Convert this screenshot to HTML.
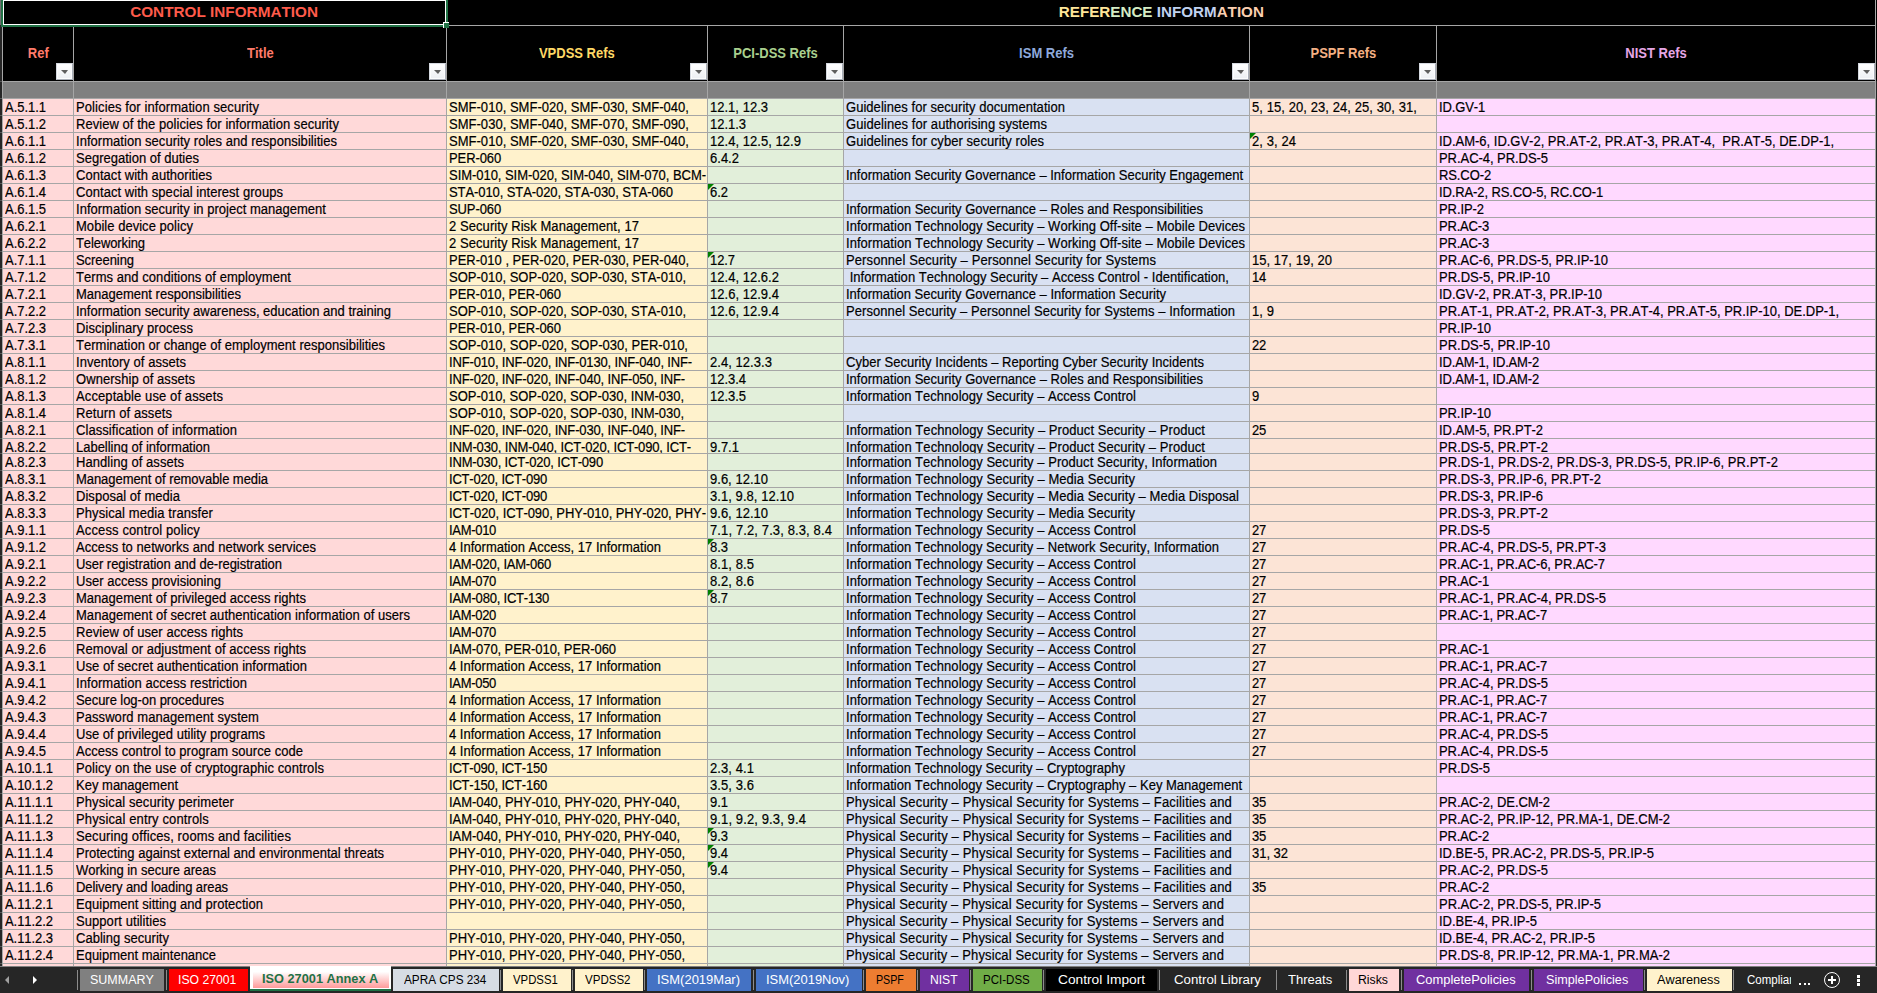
<!DOCTYPE html>
<html><head><meta charset="utf-8"><style>
*{margin:0;padding:0;box-sizing:border-box}
html,body{width:1877px;height:993px;overflow:hidden;background:#262626}
body{position:relative;font-family:"Liberation Sans",sans-serif;font-kerning:none;font-variant-ligatures:none}
div{position:absolute}
.t{overflow:hidden;color:#000;height:16px}
.t span{position:absolute;left:0;top:0;display:block;font-size:14px;line-height:16px;white-space:pre;transform:scaleX(0.92857);transform-origin:0 0;-webkit-text-stroke:0.2px #000}
.h{font-weight:bold;white-space:pre;text-align:center}
.h span{display:inline-block;transform-origin:50% 0}
.fb{width:17px;height:17px;border:1px solid;border-color:#d5d9e0 #a9aeb8 #a9aeb8 #d5d9e0;background:linear-gradient(#ffffff,#eceff3)}
.fb:before{content:"";position:absolute;left:0;top:0;right:0;bottom:0;border:1px solid #fbfcfd}
.fb:after{content:"";position:absolute;left:4px;top:6px;border-left:4px solid transparent;border-right:3px solid transparent;border-top:4px solid #5e5e5e}
.tt{top:969px;height:22px;white-space:pre;font-size:12px;line-height:22px}
.tt span{position:absolute;left:0;top:0;display:block;transform-origin:0 0}
.sep{top:970px;width:1px;height:20px;background:#8c8c8c}
</style></head><body>
<div style="left:3px;top:0px;width:1874px;height:81px;background:#000;"></div><div style="left:3px;top:82px;width:70px;height:16px;background:#808080;"></div><div style="left:3px;top:99px;width:70px;height:867px;background:#ffd9d9;"></div><div style="left:74px;top:82px;width:372px;height:16px;background:#808080;"></div><div style="left:74px;top:99px;width:372px;height:867px;background:#ffd9d9;"></div><div style="left:447px;top:82px;width:260px;height:16px;background:#808080;"></div><div style="left:447px;top:99px;width:260px;height:867px;background:#fff2cc;"></div><div style="left:708px;top:82px;width:135px;height:16px;background:#808080;"></div><div style="left:708px;top:99px;width:135px;height:867px;background:#e2efda;"></div><div style="left:844px;top:82px;width:405px;height:16px;background:#808080;"></div><div style="left:844px;top:99px;width:405px;height:867px;background:#d9e1f2;"></div><div style="left:1250px;top:82px;width:186px;height:16px;background:#808080;"></div><div style="left:1250px;top:99px;width:186px;height:867px;background:#fce4d6;"></div><div style="left:1437px;top:82px;width:438px;height:16px;background:#808080;"></div><div style="left:1437px;top:99px;width:438px;height:867px;background:#ffd9ff;"></div><div style="left:449px;top:25px;width:1427px;height:1px;background:#a6a6a6;"></div><div style="left:2px;top:81px;width:1874px;height:1px;background:#a6a6a6;"></div><div style="left:2px;top:98px;width:1874px;height:1px;background:#a6a6a6;"></div><div style="left:2px;top:115px;width:1874px;height:1px;background:#a6a6a6;"></div><div style="left:2px;top:132px;width:1874px;height:1px;background:#a6a6a6;"></div><div style="left:2px;top:149px;width:1874px;height:1px;background:#a6a6a6;"></div><div style="left:2px;top:166px;width:1874px;height:1px;background:#a6a6a6;"></div><div style="left:2px;top:183px;width:1874px;height:1px;background:#a6a6a6;"></div><div style="left:2px;top:200px;width:1874px;height:1px;background:#a6a6a6;"></div><div style="left:2px;top:217px;width:1874px;height:1px;background:#a6a6a6;"></div><div style="left:2px;top:234px;width:1874px;height:1px;background:#a6a6a6;"></div><div style="left:2px;top:251px;width:1874px;height:1px;background:#a6a6a6;"></div><div style="left:2px;top:268px;width:1874px;height:1px;background:#a6a6a6;"></div><div style="left:2px;top:285px;width:1874px;height:1px;background:#a6a6a6;"></div><div style="left:2px;top:302px;width:1874px;height:1px;background:#a6a6a6;"></div><div style="left:2px;top:319px;width:1874px;height:1px;background:#a6a6a6;"></div><div style="left:2px;top:336px;width:1874px;height:1px;background:#a6a6a6;"></div><div style="left:2px;top:353px;width:1874px;height:1px;background:#a6a6a6;"></div><div style="left:2px;top:370px;width:1874px;height:1px;background:#a6a6a6;"></div><div style="left:2px;top:387px;width:1874px;height:1px;background:#a6a6a6;"></div><div style="left:2px;top:404px;width:1874px;height:1px;background:#a6a6a6;"></div><div style="left:2px;top:421px;width:1874px;height:1px;background:#a6a6a6;"></div><div style="left:2px;top:438px;width:1874px;height:1px;background:#a6a6a6;"></div><div style="left:2px;top:453px;width:1874px;height:1px;background:#a6a6a6;"></div><div style="left:2px;top:470px;width:1874px;height:1px;background:#a6a6a6;"></div><div style="left:2px;top:487px;width:1874px;height:1px;background:#a6a6a6;"></div><div style="left:2px;top:504px;width:1874px;height:1px;background:#a6a6a6;"></div><div style="left:2px;top:521px;width:1874px;height:1px;background:#a6a6a6;"></div><div style="left:2px;top:538px;width:1874px;height:1px;background:#a6a6a6;"></div><div style="left:2px;top:555px;width:1874px;height:1px;background:#a6a6a6;"></div><div style="left:2px;top:572px;width:1874px;height:1px;background:#a6a6a6;"></div><div style="left:2px;top:589px;width:1874px;height:1px;background:#a6a6a6;"></div><div style="left:2px;top:606px;width:1874px;height:1px;background:#a6a6a6;"></div><div style="left:2px;top:623px;width:1874px;height:1px;background:#a6a6a6;"></div><div style="left:2px;top:640px;width:1874px;height:1px;background:#a6a6a6;"></div><div style="left:2px;top:657px;width:1874px;height:1px;background:#a6a6a6;"></div><div style="left:2px;top:674px;width:1874px;height:1px;background:#a6a6a6;"></div><div style="left:2px;top:691px;width:1874px;height:1px;background:#a6a6a6;"></div><div style="left:2px;top:708px;width:1874px;height:1px;background:#a6a6a6;"></div><div style="left:2px;top:725px;width:1874px;height:1px;background:#a6a6a6;"></div><div style="left:2px;top:742px;width:1874px;height:1px;background:#a6a6a6;"></div><div style="left:2px;top:759px;width:1874px;height:1px;background:#a6a6a6;"></div><div style="left:2px;top:776px;width:1874px;height:1px;background:#a6a6a6;"></div><div style="left:2px;top:793px;width:1874px;height:1px;background:#a6a6a6;"></div><div style="left:2px;top:810px;width:1874px;height:1px;background:#a6a6a6;"></div><div style="left:2px;top:827px;width:1874px;height:1px;background:#a6a6a6;"></div><div style="left:2px;top:844px;width:1874px;height:1px;background:#a6a6a6;"></div><div style="left:2px;top:861px;width:1874px;height:1px;background:#a6a6a6;"></div><div style="left:2px;top:878px;width:1874px;height:1px;background:#a6a6a6;"></div><div style="left:2px;top:895px;width:1874px;height:1px;background:#a6a6a6;"></div><div style="left:2px;top:912px;width:1874px;height:1px;background:#a6a6a6;"></div><div style="left:2px;top:929px;width:1874px;height:1px;background:#a6a6a6;"></div><div style="left:2px;top:946px;width:1874px;height:1px;background:#a6a6a6;"></div><div style="left:2px;top:963px;width:1874px;height:1px;background:#a6a6a6;"></div><div style="left:0px;top:966px;width:1877px;height:1px;background:#808080;"></div><div style="left:2px;top:26px;width:1px;height:940px;background:#a6a6a6;"></div><div style="left:73px;top:26px;width:1px;height:940px;background:#a6a6a6;"></div><div style="left:446px;top:28px;width:1px;height:938px;background:#a6a6a6;"></div><div style="left:707px;top:26px;width:1px;height:940px;background:#a6a6a6;"></div><div style="left:843px;top:26px;width:1px;height:940px;background:#a6a6a6;"></div><div style="left:1249px;top:26px;width:1px;height:940px;background:#a6a6a6;"></div><div style="left:1436px;top:26px;width:1px;height:940px;background:#a6a6a6;"></div><div style="left:1875px;top:0px;width:1px;height:966px;background:#a6a6a6;"></div><div style="left:0px;top:0px;width:1px;height:25px;background:#6e6e6e;"></div><div style="left:0px;top:81px;width:2px;height:1px;background:#5a5a5a;"></div><div style="left:0px;top:98px;width:2px;height:1px;background:#5a5a5a;"></div><div style="left:0px;top:115px;width:2px;height:1px;background:#5a5a5a;"></div><div style="left:0px;top:132px;width:2px;height:1px;background:#5a5a5a;"></div><div style="left:0px;top:149px;width:2px;height:1px;background:#5a5a5a;"></div><div style="left:0px;top:166px;width:2px;height:1px;background:#5a5a5a;"></div><div style="left:0px;top:183px;width:2px;height:1px;background:#5a5a5a;"></div><div style="left:0px;top:200px;width:2px;height:1px;background:#5a5a5a;"></div><div style="left:0px;top:217px;width:2px;height:1px;background:#5a5a5a;"></div><div style="left:0px;top:234px;width:2px;height:1px;background:#5a5a5a;"></div><div style="left:0px;top:251px;width:2px;height:1px;background:#5a5a5a;"></div><div style="left:0px;top:268px;width:2px;height:1px;background:#5a5a5a;"></div><div style="left:0px;top:285px;width:2px;height:1px;background:#5a5a5a;"></div><div style="left:0px;top:302px;width:2px;height:1px;background:#5a5a5a;"></div><div style="left:0px;top:319px;width:2px;height:1px;background:#5a5a5a;"></div><div style="left:0px;top:336px;width:2px;height:1px;background:#5a5a5a;"></div><div style="left:0px;top:353px;width:2px;height:1px;background:#5a5a5a;"></div><div style="left:0px;top:370px;width:2px;height:1px;background:#5a5a5a;"></div><div style="left:0px;top:387px;width:2px;height:1px;background:#5a5a5a;"></div><div style="left:0px;top:404px;width:2px;height:1px;background:#5a5a5a;"></div><div style="left:0px;top:421px;width:2px;height:1px;background:#5a5a5a;"></div><div style="left:0px;top:438px;width:2px;height:1px;background:#5a5a5a;"></div><div style="left:0px;top:453px;width:2px;height:1px;background:#5a5a5a;"></div><div style="left:0px;top:470px;width:2px;height:1px;background:#5a5a5a;"></div><div style="left:0px;top:487px;width:2px;height:1px;background:#5a5a5a;"></div><div style="left:0px;top:504px;width:2px;height:1px;background:#5a5a5a;"></div><div style="left:0px;top:521px;width:2px;height:1px;background:#5a5a5a;"></div><div style="left:0px;top:538px;width:2px;height:1px;background:#5a5a5a;"></div><div style="left:0px;top:555px;width:2px;height:1px;background:#5a5a5a;"></div><div style="left:0px;top:572px;width:2px;height:1px;background:#5a5a5a;"></div><div style="left:0px;top:589px;width:2px;height:1px;background:#5a5a5a;"></div><div style="left:0px;top:606px;width:2px;height:1px;background:#5a5a5a;"></div><div style="left:0px;top:623px;width:2px;height:1px;background:#5a5a5a;"></div><div style="left:0px;top:640px;width:2px;height:1px;background:#5a5a5a;"></div><div style="left:0px;top:657px;width:2px;height:1px;background:#5a5a5a;"></div><div style="left:0px;top:674px;width:2px;height:1px;background:#5a5a5a;"></div><div style="left:0px;top:691px;width:2px;height:1px;background:#5a5a5a;"></div><div style="left:0px;top:708px;width:2px;height:1px;background:#5a5a5a;"></div><div style="left:0px;top:725px;width:2px;height:1px;background:#5a5a5a;"></div><div style="left:0px;top:742px;width:2px;height:1px;background:#5a5a5a;"></div><div style="left:0px;top:759px;width:2px;height:1px;background:#5a5a5a;"></div><div style="left:0px;top:776px;width:2px;height:1px;background:#5a5a5a;"></div><div style="left:0px;top:793px;width:2px;height:1px;background:#5a5a5a;"></div><div style="left:0px;top:810px;width:2px;height:1px;background:#5a5a5a;"></div><div style="left:0px;top:827px;width:2px;height:1px;background:#5a5a5a;"></div><div style="left:0px;top:844px;width:2px;height:1px;background:#5a5a5a;"></div><div style="left:0px;top:861px;width:2px;height:1px;background:#5a5a5a;"></div><div style="left:0px;top:878px;width:2px;height:1px;background:#5a5a5a;"></div><div style="left:0px;top:895px;width:2px;height:1px;background:#5a5a5a;"></div><div style="left:0px;top:912px;width:2px;height:1px;background:#5a5a5a;"></div><div style="left:0px;top:929px;width:2px;height:1px;background:#5a5a5a;"></div><div style="left:0px;top:946px;width:2px;height:1px;background:#5a5a5a;"></div><div style="left:0px;top:963px;width:2px;height:1px;background:#5a5a5a;"></div><div class="h" style="left:3px;top:2px;width:443px;height:20px;font-size:15px;line-height:20px"><span style="transform:scaleX(1.02)"><span style="color:#ff5b4b">CONTROL INFORMATION</span></span></div><div class="h" style="left:447px;top:2px;width:1428px;height:20px;font-size:15px;line-height:20px"><span style="transform:scaleX(1.012)"><span style="color:#ffe699">R</span><span style="color:#ffe699">E</span><span style="color:#ffe699">F</span><span style="color:#ffe699">E</span><span style="color:#ffe699">R</span><span style="color:#d5ecc4">E</span><span style="color:#d5ecc4">N</span><span style="color:#d5ecc4">C</span><span style="color:#d5ecc4">E</span><span style="color:#000"> </span><span style="color:#c0d2f0">I</span><span style="color:#c0d2f0">N</span><span style="color:#c0d2f0">F</span><span style="color:#c0d2f0">O</span><span style="color:#c0d2f0">R</span><span style="color:#c0d2f0">M</span><span style="color:#fbcfb0">A</span><span style="color:#fbcfb0">T</span><span style="color:#fbcfb0">I</span><span style="color:#fbcfb0">O</span><span style="color:#fbcfb0">N</span></span></div><div class="h" style="left:3px;top:45px;width:70px;height:16px;font-size:14px;line-height:16px"><span style="transform:scaleX(0.9285714285714286)"><span style="color:#ff7b6b">Ref</span></span></div><div class="fb" style="left:56px;top:63px"></div><div class="h" style="left:74px;top:45px;width:372px;height:16px;font-size:14px;line-height:16px"><span style="transform:scaleX(0.9285714285714286)"><span style="color:#ff7b6b">Title</span></span></div><div class="fb" style="left:429px;top:63px"></div><div class="h" style="left:447px;top:45px;width:260px;height:16px;font-size:14px;line-height:16px"><span style="transform:scaleX(0.9285714285714286)"><span style="color:#ffd966">VPDSS Refs</span></span></div><div class="fb" style="left:690px;top:63px"></div><div class="h" style="left:708px;top:45px;width:135px;height:16px;font-size:14px;line-height:16px"><span style="transform:scaleX(0.9285714285714286)"><span style="color:#a9d08e">PCI-DSS Refs</span></span></div><div class="fb" style="left:826px;top:63px"></div><div class="h" style="left:844px;top:45px;width:405px;height:16px;font-size:14px;line-height:16px"><span style="transform:scaleX(0.9285714285714286)"><span style="color:#8ea9db">ISM Refs</span></span></div><div class="fb" style="left:1232px;top:63px"></div><div class="h" style="left:1250px;top:45px;width:186px;height:16px;font-size:14px;line-height:16px"><span style="transform:scaleX(0.9285714285714286)"><span style="color:#f4b084">PSPF Refs</span></span></div><div class="fb" style="left:1419px;top:63px"></div><div class="h" style="left:1437px;top:45px;width:438px;height:16px;font-size:14px;line-height:16px"><span style="transform:scaleX(0.9285714285714286)"><span style="color:#e6a6e6">NIST Refs</span></span></div><div class="fb" style="left:1858px;top:63px"></div><div style="left:1px;top:0px;width:2px;height:27px;background:#217346;"></div><div style="left:1px;top:25px;width:447px;height:2px;background:#217346;"></div><div style="left:446px;top:0px;width:2px;height:23px;background:#217346;"></div><div style="left:3px;top:0px;width:1px;height:24px;background:#fff;"></div><div style="left:3px;top:0px;width:443px;height:1px;background:#fff;"></div><div style="left:3px;top:24px;width:442px;height:1px;background:#fff;"></div><div style="left:445px;top:0px;width:1px;height:23px;background:#fff;"></div><div style="left:443px;top:22px;width:6px;height:1px;background:#fff;"></div><div style="left:443px;top:22px;width:1px;height:6px;background:#fff;"></div><div style="left:444px;top:23px;width:5px;height:5px;background:#217346;"></div><div class="t" style="left:5px;top:99px;width:68px;height:16px"><span style="letter-spacing:-0.030px">A.5.1.1</span></div><div class="t" style="left:76px;top:99px;width:370px;height:16px"><span style="letter-spacing:0.101px">Policies for information security</span></div><div class="t" style="left:449px;top:99px;width:258px;height:16px"><span style="letter-spacing:0.027px">SMF-010, SMF-020, SMF-030, SMF-040,</span></div><div class="t" style="left:710px;top:99px;width:133px;height:16px"><span style="letter-spacing:0.019px">12.1, 12.3</span></div><div class="t" style="left:846px;top:99px;width:403px;height:16px"><span style="letter-spacing:0.044px">Guidelines for security documentation</span></div><div class="t" style="left:1252px;top:99px;width:184px;height:16px"><span style="letter-spacing:0.085px">5, 15, 20, 23, 24, 25, 30, 31,</span></div><div class="t" style="left:1439px;top:99px;width:436px;height:16px"><span style="letter-spacing:-0.147px">ID.GV-1</span></div><div class="t" style="left:5px;top:116px;width:68px;height:16px"><span style="letter-spacing:-0.030px">A.5.1.2</span></div><div class="t" style="left:76px;top:116px;width:370px;height:16px"><span style="letter-spacing:0.050px">Review of the policies for information security</span></div><div class="t" style="left:449px;top:116px;width:258px;height:16px"><span style="letter-spacing:0.027px">SMF-030, SMF-040, SMF-070, SMF-090,</span></div><div class="t" style="left:710px;top:116px;width:133px;height:16px"><span style="letter-spacing:-0.026px">12.1.3</span></div><div class="t" style="left:846px;top:116px;width:403px;height:16px"><span style="letter-spacing:0.073px">Guidelines for authorising systems</span></div><div class="t" style="left:5px;top:133px;width:68px;height:16px"><span style="letter-spacing:-0.030px">A.6.1.1</span></div><div class="t" style="left:76px;top:133px;width:370px;height:16px"><span style="letter-spacing:0.037px">Information security roles and responsibilities</span></div><div class="t" style="left:449px;top:133px;width:258px;height:16px"><span style="letter-spacing:0.027px">SMF-010, SMF-020, SMF-030, SMF-040,</span></div><div class="t" style="left:710px;top:133px;width:133px;height:16px"><span style="letter-spacing:0.044px">12.4, 12.5, 12.9</span></div><div class="t" style="left:846px;top:133px;width:403px;height:16px"><span style="letter-spacing:0.068px">Guidelines for cyber security roles</span></div><div class="t" style="left:1252px;top:133px;width:184px;height:16px"><span style="letter-spacing:0.085px">2, 3, 24</span></div><div style="left:1250px;top:133px;width:0;height:0;border-top:6px solid #008000;border-right:6px solid transparent"></div><div class="t" style="left:1439px;top:133px;width:436px;height:16px"><span style="letter-spacing:-0.014px">ID.AM-6, ID.GV-2, PR.AT-2, PR.AT-3, PR.AT-4,  PR.AT-5, DE.DP-1,</span></div><div class="t" style="left:5px;top:150px;width:68px;height:16px"><span style="letter-spacing:-0.030px">A.6.1.2</span></div><div class="t" style="left:76px;top:150px;width:370px;height:16px"><span style="letter-spacing:0.007px">Segregation of duties</span></div><div class="t" style="left:449px;top:150px;width:258px;height:16px"><span style="letter-spacing:-0.115px">PER-060</span></div><div class="t" style="left:710px;top:150px;width:133px;height:16px"><span style="letter-spacing:0.019px">6.4.2</span></div><div class="t" style="left:1439px;top:150px;width:436px;height:16px"><span style="letter-spacing:-0.054px">PR.AC-4, PR.DS-5</span></div><div class="t" style="left:5px;top:167px;width:68px;height:16px"><span style="letter-spacing:-0.030px">A.6.1.3</span></div><div class="t" style="left:76px;top:167px;width:370px;height:16px"><span style="letter-spacing:0.039px">Contact with authorities</span></div><div class="t" style="left:449px;top:167px;width:258px;height:16px"><span style="letter-spacing:-0.044px">SIM-010, SIM-020, SIM-040, SIM-070, BCM-</span></div><div class="t" style="left:846px;top:167px;width:403px;height:16px"><span style="letter-spacing:-0.007px">Information Security Governance – Information Security Engagement</span></div><div class="t" style="left:1439px;top:167px;width:436px;height:16px"><span style="letter-spacing:-0.112px">RS.CO-2</span></div><div class="t" style="left:5px;top:184px;width:68px;height:16px"><span style="letter-spacing:-0.030px">A.6.1.4</span></div><div class="t" style="left:76px;top:184px;width:370px;height:16px"><span style="letter-spacing:0.053px">Contact with special interest groups</span></div><div class="t" style="left:449px;top:184px;width:258px;height:16px"><span style="letter-spacing:-0.091px">STA-010, STA-020, STA-030, STA-060</span></div><div class="t" style="left:710px;top:184px;width:133px;height:16px"><span style="letter-spacing:-0.026px">6.2</span></div><div style="left:708px;top:184px;width:0;height:0;border-top:6px solid #008000;border-right:6px solid transparent"></div><div class="t" style="left:1439px;top:184px;width:436px;height:16px"><span style="letter-spacing:-0.123px">ID.RA-2, RS.CO-5, RC.CO-1</span></div><div class="t" style="left:5px;top:201px;width:68px;height:16px"><span style="letter-spacing:-0.030px">A.6.1.5</span></div><div class="t" style="left:76px;top:201px;width:370px;height:16px"><span style="letter-spacing:0.018px">Information security in project management</span></div><div class="t" style="left:449px;top:201px;width:258px;height:16px"><span style="letter-spacing:-0.115px">SUP-060</span></div><div class="t" style="left:846px;top:201px;width:403px;height:16px"><span style="letter-spacing:0.001px">Information Security Governance – Roles and Responsibilities</span></div><div class="t" style="left:1439px;top:201px;width:436px;height:16px"><span style="letter-spacing:-0.079px">PR.IP-2</span></div><div class="t" style="left:5px;top:218px;width:68px;height:16px"><span style="letter-spacing:-0.030px">A.6.2.1</span></div><div class="t" style="left:76px;top:218px;width:370px;height:16px"><span style="letter-spacing:0.036px">Mobile device policy</span></div><div class="t" style="left:449px;top:218px;width:258px;height:16px"><span style="letter-spacing:0.077px">2 Security Risk Management, 17</span></div><div class="t" style="left:846px;top:218px;width:403px;height:16px"><span style="letter-spacing:0.038px">Information Technology Security – Working Off-site – Mobile Devices</span></div><div class="t" style="left:1439px;top:218px;width:436px;height:16px"><span style="letter-spacing:-0.198px">PR.AC-3</span></div><div class="t" style="left:5px;top:235px;width:68px;height:16px"><span style="letter-spacing:-0.030px">A.6.2.2</span></div><div class="t" style="left:76px;top:235px;width:370px;height:16px"><span style="letter-spacing:-0.106px">Teleworking</span></div><div class="t" style="left:449px;top:235px;width:258px;height:16px"><span style="letter-spacing:0.077px">2 Security Risk Management, 17</span></div><div class="t" style="left:846px;top:235px;width:403px;height:16px"><span style="letter-spacing:0.038px">Information Technology Security – Working Off-site – Mobile Devices</span></div><div class="t" style="left:1439px;top:235px;width:436px;height:16px"><span style="letter-spacing:-0.198px">PR.AC-3</span></div><div class="t" style="left:5px;top:252px;width:68px;height:16px"><span style="letter-spacing:-0.030px">A.7.1.1</span></div><div class="t" style="left:76px;top:252px;width:370px;height:16px"><span style="letter-spacing:-0.064px">Screening</span></div><div class="t" style="left:449px;top:252px;width:258px;height:16px"><span style="letter-spacing:0.003px">PER-010 , PER-020, PER-030, PER-040,</span></div><div class="t" style="left:710px;top:252px;width:133px;height:16px"><span style="letter-spacing:-0.081px">12.7</span></div><div style="left:708px;top:252px;width:0;height:0;border-top:6px solid #008000;border-right:6px solid transparent"></div><div class="t" style="left:846px;top:252px;width:403px;height:16px"><span style="letter-spacing:0.107px">Personnel Security – Personnel Security for Systems</span></div><div class="t" style="left:1252px;top:252px;width:184px;height:16px"><span style="letter-spacing:0.038px">15, 17, 19, 20</span></div><div class="t" style="left:1439px;top:252px;width:436px;height:16px"><span style="letter-spacing:-0.032px">PR.AC-6, PR.DS-5, PR.IP-10</span></div><div class="t" style="left:5px;top:269px;width:68px;height:16px"><span style="letter-spacing:-0.030px">A.7.1.2</span></div><div class="t" style="left:76px;top:269px;width:370px;height:16px"><span style="letter-spacing:0.058px">Terms and conditions of employment</span></div><div class="t" style="left:449px;top:269px;width:258px;height:16px"><span style="letter-spacing:-0.000px">SOP-010, SOP-020, SOP-030, STA-010,</span></div><div class="t" style="left:710px;top:269px;width:133px;height:16px"><span style="letter-spacing:0.030px">12.4, 12.6.2</span></div><div class="t" style="left:846px;top:269px;width:403px;height:16px"><span style="letter-spacing:0.047px"> Information Technology Security – Access Control - Identification,</span></div><div class="t" style="left:1252px;top:269px;width:184px;height:16px"><span style="letter-spacing:-0.248px">14</span></div><div class="t" style="left:1439px;top:269px;width:436px;height:16px"><span style="letter-spacing:-0.016px">PR.DS-5, PR.IP-10</span></div><div class="t" style="left:5px;top:286px;width:68px;height:16px"><span style="letter-spacing:-0.030px">A.7.2.1</span></div><div class="t" style="left:76px;top:286px;width:370px;height:16px"><span style="letter-spacing:0.010px">Management responsibilities</span></div><div class="t" style="left:449px;top:286px;width:258px;height:16px"><span style="letter-spacing:-0.049px">PER-010, PER-060</span></div><div class="t" style="left:710px;top:286px;width:133px;height:16px"><span style="letter-spacing:0.030px">12.6, 12.9.4</span></div><div class="t" style="left:846px;top:286px;width:403px;height:16px"><span style="letter-spacing:-0.002px">Information Security Governance – Information Security</span></div><div class="t" style="left:1439px;top:286px;width:436px;height:16px"><span style="letter-spacing:-0.041px">ID.GV-2, PR.AT-3, PR.IP-10</span></div><div class="t" style="left:5px;top:303px;width:68px;height:16px"><span style="letter-spacing:-0.030px">A.7.2.2</span></div><div class="t" style="left:76px;top:303px;width:370px;height:16px"><span style="letter-spacing:-0.001px">Information security awareness, education and training</span></div><div class="t" style="left:449px;top:303px;width:258px;height:16px"><span style="letter-spacing:-0.000px">SOP-010, SOP-020, SOP-030, STA-010,</span></div><div class="t" style="left:710px;top:303px;width:133px;height:16px"><span style="letter-spacing:0.030px">12.6, 12.9.4</span></div><div class="t" style="left:846px;top:303px;width:403px;height:16px"><span style="letter-spacing:0.076px">Personnel Security – Personnel Security for Systems – Information</span></div><div class="t" style="left:1252px;top:303px;width:184px;height:16px"><span style="letter-spacing:0.085px">1, 9</span></div><div class="t" style="left:1439px;top:303px;width:436px;height:16px"><span style="letter-spacing:-0.003px">PR.AT-1, PR.AT-2, PR.AT-3, PR.AT-4, PR.AT-5, PR.IP-10, DE.DP-1,</span></div><div class="t" style="left:5px;top:320px;width:68px;height:16px"><span style="letter-spacing:-0.030px">A.7.2.3</span></div><div class="t" style="left:76px;top:320px;width:370px;height:16px"><span style="letter-spacing:0.076px">Disciplinary process</span></div><div class="t" style="left:449px;top:320px;width:258px;height:16px"><span style="letter-spacing:-0.049px">PER-010, PER-060</span></div><div class="t" style="left:1439px;top:320px;width:436px;height:16px"><span style="letter-spacing:-0.100px">PR.IP-10</span></div><div class="t" style="left:5px;top:337px;width:68px;height:16px"><span style="letter-spacing:-0.030px">A.7.3.1</span></div><div class="t" style="left:76px;top:337px;width:370px;height:16px"><span style="letter-spacing:0.025px">Termination or change of employment responsibilities</span></div><div class="t" style="left:449px;top:337px;width:258px;height:16px"><span style="letter-spacing:0.017px">SOP-010, SOP-020, SOP-030, PER-010,</span></div><div class="t" style="left:1252px;top:337px;width:184px;height:16px"><span style="letter-spacing:-0.248px">22</span></div><div class="t" style="left:1439px;top:337px;width:436px;height:16px"><span style="letter-spacing:-0.016px">PR.DS-5, PR.IP-10</span></div><div class="t" style="left:5px;top:354px;width:68px;height:16px"><span style="letter-spacing:-0.030px">A.8.1.1</span></div><div class="t" style="left:76px;top:354px;width:370px;height:16px"><span style="letter-spacing:0.050px">Inventory of assets</span></div><div class="t" style="left:449px;top:354px;width:258px;height:16px"><span style="letter-spacing:-0.164px">INF-010, INF-020, INF-0130, INF-040, INF-</span></div><div class="t" style="left:710px;top:354px;width:133px;height:16px"><span style="letter-spacing:0.055px">2.4, 12.3.3</span></div><div class="t" style="left:846px;top:354px;width:403px;height:16px"><span style="letter-spacing:0.031px">Cyber Security Incidents – Reporting Cyber Security Incidents</span></div><div class="t" style="left:1439px;top:354px;width:436px;height:16px"><span style="letter-spacing:-0.173px">ID.AM-1, ID.AM-2</span></div><div class="t" style="left:5px;top:371px;width:68px;height:16px"><span style="letter-spacing:-0.030px">A.8.1.2</span></div><div class="t" style="left:76px;top:371px;width:370px;height:16px"><span style="letter-spacing:0.069px">Ownership of assets</span></div><div class="t" style="left:449px;top:371px;width:258px;height:16px"><span style="letter-spacing:-0.162px">INF-020, INF-020, INF-040, INF-050, INF-</span></div><div class="t" style="left:710px;top:371px;width:133px;height:16px"><span style="letter-spacing:-0.026px">12.3.4</span></div><div class="t" style="left:846px;top:371px;width:403px;height:16px"><span style="letter-spacing:0.001px">Information Security Governance – Roles and Responsibilities</span></div><div class="t" style="left:1439px;top:371px;width:436px;height:16px"><span style="letter-spacing:-0.173px">ID.AM-1, ID.AM-2</span></div><div class="t" style="left:5px;top:388px;width:68px;height:16px"><span style="letter-spacing:-0.030px">A.8.1.3</span></div><div class="t" style="left:76px;top:388px;width:370px;height:16px"><span style="letter-spacing:0.111px">Acceptable use of assets</span></div><div class="t" style="left:449px;top:388px;width:258px;height:16px"><span style="letter-spacing:-0.017px">SOP-010, SOP-020, SOP-030, INM-030,</span></div><div class="t" style="left:710px;top:388px;width:133px;height:16px"><span style="letter-spacing:-0.026px">12.3.5</span></div><div class="t" style="left:846px;top:388px;width:403px;height:16px"><span style="letter-spacing:0.038px">Information Technology Security – Access Control</span></div><div class="t" style="left:1252px;top:388px;width:184px;height:16px"><span style="letter-spacing:-0.248px">9</span></div><div class="t" style="left:5px;top:405px;width:68px;height:16px"><span style="letter-spacing:-0.030px">A.8.1.4</span></div><div class="t" style="left:76px;top:405px;width:370px;height:16px"><span style="letter-spacing:0.090px">Return of assets</span></div><div class="t" style="left:449px;top:405px;width:258px;height:16px"><span style="letter-spacing:-0.017px">SOP-010, SOP-020, SOP-030, INM-030,</span></div><div class="t" style="left:1439px;top:405px;width:436px;height:16px"><span style="letter-spacing:-0.100px">PR.IP-10</span></div><div class="t" style="left:5px;top:422px;width:68px;height:16px"><span style="letter-spacing:-0.030px">A.8.2.1</span></div><div class="t" style="left:76px;top:422px;width:370px;height:16px"><span style="letter-spacing:0.076px">Classification of information</span></div><div class="t" style="left:449px;top:422px;width:258px;height:16px"><span style="letter-spacing:-0.162px">INF-020, INF-020, INF-030, INF-040, INF-</span></div><div class="t" style="left:846px;top:422px;width:403px;height:16px"><span style="letter-spacing:0.063px">Information Technology Security – Product Security – Product</span></div><div class="t" style="left:1252px;top:422px;width:184px;height:16px"><span style="letter-spacing:-0.248px">25</span></div><div class="t" style="left:1439px;top:422px;width:436px;height:16px"><span style="letter-spacing:-0.050px">ID.AM-5, PR.PT-2</span></div><div class="t" style="left:5px;top:439px;width:68px;height:14px"><span style="letter-spacing:-0.030px">A.8.2.2</span></div><div class="t" style="left:76px;top:439px;width:370px;height:14px"><span style="letter-spacing:-0.019px">Labelling of information</span></div><div class="t" style="left:449px;top:439px;width:258px;height:14px"><span style="letter-spacing:-0.156px">INM-030, INM-040, ICT-020, ICT-090, ICT-</span></div><div class="t" style="left:710px;top:439px;width:133px;height:14px"><span style="letter-spacing:0.019px">9.7.1</span></div><div class="t" style="left:846px;top:439px;width:403px;height:14px"><span style="letter-spacing:0.063px">Information Technology Security – Product Security – Product</span></div><div class="t" style="left:1439px;top:439px;width:436px;height:14px"><span style="letter-spacing:0.043px">PR.DS-5, PR.PT-2</span></div><div class="t" style="left:5px;top:454px;width:68px;height:16px"><span style="letter-spacing:-0.030px">A.8.2.3</span></div><div class="t" style="left:76px;top:454px;width:370px;height:16px"><span style="letter-spacing:0.063px">Handling of assets</span></div><div class="t" style="left:449px;top:454px;width:258px;height:16px"><span style="letter-spacing:-0.182px">INM-030, ICT-020, ICT-090</span></div><div class="t" style="left:846px;top:454px;width:403px;height:16px"><span style="letter-spacing:0.043px">Information Technology Security – Product Security, Information</span></div><div class="t" style="left:1439px;top:454px;width:436px;height:16px"><span style="letter-spacing:0.049px">PR.DS-1, PR.DS-2, PR.DS-3, PR.DS-5, PR.IP-6, PR.PT-2</span></div><div class="t" style="left:5px;top:471px;width:68px;height:16px"><span style="letter-spacing:-0.030px">A.8.3.1</span></div><div class="t" style="left:76px;top:471px;width:370px;height:16px"><span style="letter-spacing:-0.062px">Management of removable media</span></div><div class="t" style="left:449px;top:471px;width:258px;height:16px"><span style="letter-spacing:-0.212px">ICT-020, ICT-090</span></div><div class="t" style="left:710px;top:471px;width:133px;height:16px"><span style="letter-spacing:0.019px">9.6, 12.10</span></div><div class="t" style="left:846px;top:471px;width:403px;height:16px"><span style="letter-spacing:0.048px">Information Technology Security – Media Security</span></div><div class="t" style="left:1439px;top:471px;width:436px;height:16px"><span style="letter-spacing:0.039px">PR.DS-3, PR.IP-6, PR.PT-2</span></div><div class="t" style="left:5px;top:488px;width:68px;height:16px"><span style="letter-spacing:-0.030px">A.8.3.2</span></div><div class="t" style="left:76px;top:488px;width:370px;height:16px"><span style="letter-spacing:0.043px">Disposal of media</span></div><div class="t" style="left:449px;top:488px;width:258px;height:16px"><span style="letter-spacing:-0.212px">ICT-020, ICT-090</span></div><div class="t" style="left:710px;top:488px;width:133px;height:16px"><span style="letter-spacing:0.063px">3.1, 9.8, 12.10</span></div><div class="t" style="left:846px;top:488px;width:403px;height:16px"><span style="letter-spacing:0.047px">Information Technology Security – Media Security – Media Disposal</span></div><div class="t" style="left:1439px;top:488px;width:436px;height:16px"><span style="letter-spacing:-0.002px">PR.DS-3, PR.IP-6</span></div><div class="t" style="left:5px;top:505px;width:68px;height:16px"><span style="letter-spacing:-0.030px">A.8.3.3</span></div><div class="t" style="left:76px;top:505px;width:370px;height:16px"><span style="letter-spacing:0.089px">Physical media transfer</span></div><div class="t" style="left:449px;top:505px;width:258px;height:16px"><span style="letter-spacing:-0.064px">ICT-020, ICT-090, PHY-010, PHY-020, PHY-</span></div><div class="t" style="left:710px;top:505px;width:133px;height:16px"><span style="letter-spacing:0.019px">9.6, 12.10</span></div><div class="t" style="left:846px;top:505px;width:403px;height:16px"><span style="letter-spacing:0.048px">Information Technology Security – Media Security</span></div><div class="t" style="left:1439px;top:505px;width:436px;height:16px"><span style="letter-spacing:0.043px">PR.DS-3, PR.PT-2</span></div><div class="t" style="left:5px;top:522px;width:68px;height:16px"><span style="letter-spacing:-0.030px">A.9.1.1</span></div><div class="t" style="left:76px;top:522px;width:370px;height:16px"><span style="letter-spacing:0.134px">Access control policy</span></div><div class="t" style="left:449px;top:522px;width:258px;height:16px"><span style="letter-spacing:-0.328px">IAM-010</span></div><div class="t" style="left:710px;top:522px;width:133px;height:16px"><span style="letter-spacing:0.129px">7.1, 7.2, 7.3, 8.3, 8.4</span></div><div class="t" style="left:846px;top:522px;width:403px;height:16px"><span style="letter-spacing:0.038px">Information Technology Security – Access Control</span></div><div class="t" style="left:1252px;top:522px;width:184px;height:16px"><span style="letter-spacing:-0.248px">27</span></div><div class="t" style="left:1439px;top:522px;width:436px;height:16px"><span style="letter-spacing:-0.044px">PR.DS-5</span></div><div class="t" style="left:5px;top:539px;width:68px;height:16px"><span style="letter-spacing:-0.030px">A.9.1.2</span></div><div class="t" style="left:76px;top:539px;width:370px;height:16px"><span style="letter-spacing:0.063px">Access to networks and network services</span></div><div class="t" style="left:449px;top:539px;width:258px;height:16px"><span style="letter-spacing:0.009px">4 Information Access, 17 Information</span></div><div class="t" style="left:710px;top:539px;width:133px;height:16px"><span style="letter-spacing:-0.026px">8.3</span></div><div style="left:708px;top:539px;width:0;height:0;border-top:6px solid #008000;border-right:6px solid transparent"></div><div class="t" style="left:846px;top:539px;width:403px;height:16px"><span style="letter-spacing:0.028px">Information Technology Security – Network Security, Information</span></div><div class="t" style="left:1252px;top:539px;width:184px;height:16px"><span style="letter-spacing:-0.248px">27</span></div><div class="t" style="left:1439px;top:539px;width:436px;height:16px"><span style="letter-spacing:0.006px">PR.AC-4, PR.DS-5, PR.PT-3</span></div><div class="t" style="left:5px;top:556px;width:68px;height:16px"><span style="letter-spacing:-0.030px">A.9.2.1</span></div><div class="t" style="left:76px;top:556px;width:370px;height:16px"><span style="letter-spacing:-0.040px">User registration and de-registration</span></div><div class="t" style="left:449px;top:556px;width:258px;height:16px"><span style="letter-spacing:-0.235px">IAM-020, IAM-060</span></div><div class="t" style="left:710px;top:556px;width:133px;height:16px"><span style="letter-spacing:0.085px">8.1, 8.5</span></div><div class="t" style="left:846px;top:556px;width:403px;height:16px"><span style="letter-spacing:0.038px">Information Technology Security – Access Control</span></div><div class="t" style="left:1252px;top:556px;width:184px;height:16px"><span style="letter-spacing:-0.248px">27</span></div><div class="t" style="left:1439px;top:556px;width:436px;height:16px"><span style="letter-spacing:-0.100px">PR.AC-1, PR.AC-6, PR.AC-7</span></div><div class="t" style="left:5px;top:573px;width:68px;height:16px"><span style="letter-spacing:-0.030px">A.9.2.2</span></div><div class="t" style="left:76px;top:573px;width:370px;height:16px"><span style="letter-spacing:0.022px">User access provisioning</span></div><div class="t" style="left:449px;top:573px;width:258px;height:16px"><span style="letter-spacing:-0.328px">IAM-070</span></div><div class="t" style="left:710px;top:573px;width:133px;height:16px"><span style="letter-spacing:0.085px">8.2, 8.6</span></div><div class="t" style="left:846px;top:573px;width:403px;height:16px"><span style="letter-spacing:0.038px">Information Technology Security – Access Control</span></div><div class="t" style="left:1252px;top:573px;width:184px;height:16px"><span style="letter-spacing:-0.248px">27</span></div><div class="t" style="left:1439px;top:573px;width:436px;height:16px"><span style="letter-spacing:-0.198px">PR.AC-1</span></div><div class="t" style="left:5px;top:590px;width:68px;height:16px"><span style="letter-spacing:-0.030px">A.9.2.3</span></div><div class="t" style="left:76px;top:590px;width:370px;height:16px"><span style="letter-spacing:0.027px">Management of privileged access rights</span></div><div class="t" style="left:449px;top:590px;width:258px;height:16px"><span style="letter-spacing:-0.223px">IAM-080, ICT-130</span></div><div class="t" style="left:710px;top:590px;width:133px;height:16px"><span style="letter-spacing:-0.026px">8.7</span></div><div style="left:708px;top:590px;width:0;height:0;border-top:6px solid #008000;border-right:6px solid transparent"></div><div class="t" style="left:846px;top:590px;width:403px;height:16px"><span style="letter-spacing:0.038px">Information Technology Security – Access Control</span></div><div class="t" style="left:1252px;top:590px;width:184px;height:16px"><span style="letter-spacing:-0.248px">27</span></div><div class="t" style="left:1439px;top:590px;width:436px;height:16px"><span style="letter-spacing:-0.057px">PR.AC-1, PR.AC-4, PR.DS-5</span></div><div class="t" style="left:5px;top:607px;width:68px;height:16px"><span style="letter-spacing:-0.030px">A.9.2.4</span></div><div class="t" style="left:76px;top:607px;width:370px;height:16px"><span style="letter-spacing:0.045px">Management of secret authentication information of users</span></div><div class="t" style="left:449px;top:607px;width:258px;height:16px"><span style="letter-spacing:-0.328px">IAM-020</span></div><div class="t" style="left:846px;top:607px;width:403px;height:16px"><span style="letter-spacing:0.038px">Information Technology Security – Access Control</span></div><div class="t" style="left:1252px;top:607px;width:184px;height:16px"><span style="letter-spacing:-0.248px">27</span></div><div class="t" style="left:1439px;top:607px;width:436px;height:16px"><span style="letter-spacing:-0.121px">PR.AC-1, PR.AC-7</span></div><div class="t" style="left:5px;top:624px;width:68px;height:16px"><span style="letter-spacing:-0.030px">A.9.2.5</span></div><div class="t" style="left:76px;top:624px;width:370px;height:16px"><span style="letter-spacing:0.060px">Review of user access rights</span></div><div class="t" style="left:449px;top:624px;width:258px;height:16px"><span style="letter-spacing:-0.328px">IAM-070</span></div><div class="t" style="left:846px;top:624px;width:403px;height:16px"><span style="letter-spacing:0.038px">Information Technology Security – Access Control</span></div><div class="t" style="left:1252px;top:624px;width:184px;height:16px"><span style="letter-spacing:-0.248px">27</span></div><div class="t" style="left:5px;top:641px;width:68px;height:16px"><span style="letter-spacing:-0.030px">A.9.2.6</span></div><div class="t" style="left:76px;top:641px;width:370px;height:16px"><span style="letter-spacing:0.068px">Removal or adjustment of access rights</span></div><div class="t" style="left:449px;top:641px;width:258px;height:16px"><span style="letter-spacing:-0.089px">IAM-070, PER-010, PER-060</span></div><div class="t" style="left:846px;top:641px;width:403px;height:16px"><span style="letter-spacing:0.038px">Information Technology Security – Access Control</span></div><div class="t" style="left:1252px;top:641px;width:184px;height:16px"><span style="letter-spacing:-0.248px">27</span></div><div class="t" style="left:1439px;top:641px;width:436px;height:16px"><span style="letter-spacing:-0.198px">PR.AC-1</span></div><div class="t" style="left:5px;top:658px;width:68px;height:16px"><span style="letter-spacing:-0.030px">A.9.3.1</span></div><div class="t" style="left:76px;top:658px;width:370px;height:16px"><span style="letter-spacing:0.052px">Use of secret authentication information</span></div><div class="t" style="left:449px;top:658px;width:258px;height:16px"><span style="letter-spacing:0.009px">4 Information Access, 17 Information</span></div><div class="t" style="left:846px;top:658px;width:403px;height:16px"><span style="letter-spacing:0.038px">Information Technology Security – Access Control</span></div><div class="t" style="left:1252px;top:658px;width:184px;height:16px"><span style="letter-spacing:-0.248px">27</span></div><div class="t" style="left:1439px;top:658px;width:436px;height:16px"><span style="letter-spacing:-0.121px">PR.AC-1, PR.AC-7</span></div><div class="t" style="left:5px;top:675px;width:68px;height:16px"><span style="letter-spacing:-0.030px">A.9.4.1</span></div><div class="t" style="left:76px;top:675px;width:370px;height:16px"><span style="letter-spacing:0.070px">Information access restriction</span></div><div class="t" style="left:449px;top:675px;width:258px;height:16px"><span style="letter-spacing:-0.328px">IAM-050</span></div><div class="t" style="left:846px;top:675px;width:403px;height:16px"><span style="letter-spacing:0.038px">Information Technology Security – Access Control</span></div><div class="t" style="left:1252px;top:675px;width:184px;height:16px"><span style="letter-spacing:-0.248px">27</span></div><div class="t" style="left:1439px;top:675px;width:436px;height:16px"><span style="letter-spacing:-0.054px">PR.AC-4, PR.DS-5</span></div><div class="t" style="left:5px;top:692px;width:68px;height:16px"><span style="letter-spacing:-0.030px">A.9.4.2</span></div><div class="t" style="left:76px;top:692px;width:370px;height:16px"><span style="letter-spacing:-0.071px">Secure log-on procedures</span></div><div class="t" style="left:449px;top:692px;width:258px;height:16px"><span style="letter-spacing:0.009px">4 Information Access, 17 Information</span></div><div class="t" style="left:846px;top:692px;width:403px;height:16px"><span style="letter-spacing:0.038px">Information Technology Security – Access Control</span></div><div class="t" style="left:1252px;top:692px;width:184px;height:16px"><span style="letter-spacing:-0.248px">27</span></div><div class="t" style="left:1439px;top:692px;width:436px;height:16px"><span style="letter-spacing:-0.121px">PR.AC-1, PR.AC-7</span></div><div class="t" style="left:5px;top:709px;width:68px;height:16px"><span style="letter-spacing:-0.030px">A.9.4.3</span></div><div class="t" style="left:76px;top:709px;width:370px;height:16px"><span style="letter-spacing:0.068px">Password management system</span></div><div class="t" style="left:449px;top:709px;width:258px;height:16px"><span style="letter-spacing:0.009px">4 Information Access, 17 Information</span></div><div class="t" style="left:846px;top:709px;width:403px;height:16px"><span style="letter-spacing:0.038px">Information Technology Security – Access Control</span></div><div class="t" style="left:1252px;top:709px;width:184px;height:16px"><span style="letter-spacing:-0.248px">27</span></div><div class="t" style="left:1439px;top:709px;width:436px;height:16px"><span style="letter-spacing:-0.121px">PR.AC-1, PR.AC-7</span></div><div class="t" style="left:5px;top:726px;width:68px;height:16px"><span style="letter-spacing:-0.030px">A.9.4.4</span></div><div class="t" style="left:76px;top:726px;width:370px;height:16px"><span style="letter-spacing:0.013px">Use of privileged utility programs</span></div><div class="t" style="left:449px;top:726px;width:258px;height:16px"><span style="letter-spacing:0.009px">4 Information Access, 17 Information</span></div><div class="t" style="left:846px;top:726px;width:403px;height:16px"><span style="letter-spacing:0.038px">Information Technology Security – Access Control</span></div><div class="t" style="left:1252px;top:726px;width:184px;height:16px"><span style="letter-spacing:-0.248px">27</span></div><div class="t" style="left:1439px;top:726px;width:436px;height:16px"><span style="letter-spacing:-0.054px">PR.AC-4, PR.DS-5</span></div><div class="t" style="left:5px;top:743px;width:68px;height:16px"><span style="letter-spacing:-0.030px">A.9.4.5</span></div><div class="t" style="left:76px;top:743px;width:370px;height:16px"><span style="letter-spacing:0.045px">Access control to program source code</span></div><div class="t" style="left:449px;top:743px;width:258px;height:16px"><span style="letter-spacing:0.009px">4 Information Access, 17 Information</span></div><div class="t" style="left:846px;top:743px;width:403px;height:16px"><span style="letter-spacing:0.038px">Information Technology Security – Access Control</span></div><div class="t" style="left:1252px;top:743px;width:184px;height:16px"><span style="letter-spacing:-0.248px">27</span></div><div class="t" style="left:1439px;top:743px;width:436px;height:16px"><span style="letter-spacing:-0.054px">PR.AC-4, PR.DS-5</span></div><div class="t" style="left:5px;top:760px;width:68px;height:16px"><span style="letter-spacing:-0.057px">A.10.1.1</span></div><div class="t" style="left:76px;top:760px;width:370px;height:16px"><span style="letter-spacing:0.094px">Policy on the use of cryptographic controls</span></div><div class="t" style="left:449px;top:760px;width:258px;height:16px"><span style="letter-spacing:-0.212px">ICT-090, ICT-150</span></div><div class="t" style="left:710px;top:760px;width:133px;height:16px"><span style="letter-spacing:0.085px">2.3, 4.1</span></div><div class="t" style="left:846px;top:760px;width:403px;height:16px"><span style="letter-spacing:0.002px">Information Technology Security – Cryptography</span></div><div class="t" style="left:1439px;top:760px;width:436px;height:16px"><span style="letter-spacing:-0.044px">PR.DS-5</span></div><div class="t" style="left:5px;top:777px;width:68px;height:16px"><span style="letter-spacing:-0.057px">A.10.1.2</span></div><div class="t" style="left:76px;top:777px;width:370px;height:16px"><span style="letter-spacing:0.008px">Key management</span></div><div class="t" style="left:449px;top:777px;width:258px;height:16px"><span style="letter-spacing:-0.212px">ICT-150, ICT-160</span></div><div class="t" style="left:710px;top:777px;width:133px;height:16px"><span style="letter-spacing:0.085px">3.5, 3.6</span></div><div class="t" style="left:846px;top:777px;width:403px;height:16px"><span style="letter-spacing:0.013px">Information Technology Security – Cryptography – Key Management</span></div><div class="t" style="left:5px;top:794px;width:68px;height:16px"><span style="letter-spacing:-0.057px">A.11.1.1</span></div><div class="t" style="left:76px;top:794px;width:370px;height:16px"><span style="letter-spacing:0.107px">Physical security perimeter</span></div><div class="t" style="left:449px;top:794px;width:258px;height:16px"><span style="letter-spacing:-0.051px">IAM-040, PHY-010, PHY-020, PHY-040,</span></div><div class="t" style="left:710px;top:794px;width:133px;height:16px"><span style="letter-spacing:-0.026px">9.1</span></div><div class="t" style="left:846px;top:794px;width:403px;height:16px"><span style="letter-spacing:0.180px">Physical Security – Physical Security for Systems – Facilities and</span></div><div class="t" style="left:1252px;top:794px;width:184px;height:16px"><span style="letter-spacing:-0.248px">35</span></div><div class="t" style="left:1439px;top:794px;width:436px;height:16px"><span style="letter-spacing:-0.065px">PR.AC-2, DE.CM-2</span></div><div class="t" style="left:5px;top:811px;width:68px;height:16px"><span style="letter-spacing:-0.057px">A.11.1.2</span></div><div class="t" style="left:76px;top:811px;width:370px;height:16px"><span style="letter-spacing:0.138px">Physical entry controls</span></div><div class="t" style="left:449px;top:811px;width:258px;height:16px"><span style="letter-spacing:-0.051px">IAM-040, PHY-010, PHY-020, PHY-040,</span></div><div class="t" style="left:710px;top:811px;width:133px;height:16px"><span style="letter-spacing:0.122px">9.1, 9.2, 9.3, 9.4</span></div><div class="t" style="left:846px;top:811px;width:403px;height:16px"><span style="letter-spacing:0.180px">Physical Security – Physical Security for Systems – Facilities and</span></div><div class="t" style="left:1252px;top:811px;width:184px;height:16px"><span style="letter-spacing:-0.248px">35</span></div><div class="t" style="left:1439px;top:811px;width:436px;height:16px"><span style="letter-spacing:-0.027px">PR.AC-2, PR.IP-12, PR.MA-1, DE.CM-2</span></div><div class="t" style="left:5px;top:828px;width:68px;height:16px"><span style="letter-spacing:-0.057px">A.11.1.3</span></div><div class="t" style="left:76px;top:828px;width:370px;height:16px"><span style="letter-spacing:0.114px">Securing offices, rooms and facilities</span></div><div class="t" style="left:449px;top:828px;width:258px;height:16px"><span style="letter-spacing:-0.051px">IAM-040, PHY-010, PHY-020, PHY-040,</span></div><div class="t" style="left:710px;top:828px;width:133px;height:16px"><span style="letter-spacing:-0.026px">9.3</span></div><div style="left:708px;top:828px;width:0;height:0;border-top:6px solid #008000;border-right:6px solid transparent"></div><div class="t" style="left:846px;top:828px;width:403px;height:16px"><span style="letter-spacing:0.180px">Physical Security – Physical Security for Systems – Facilities and</span></div><div class="t" style="left:1252px;top:828px;width:184px;height:16px"><span style="letter-spacing:-0.248px">35</span></div><div class="t" style="left:1439px;top:828px;width:436px;height:16px"><span style="letter-spacing:-0.198px">PR.AC-2</span></div><div class="t" style="left:5px;top:845px;width:68px;height:16px"><span style="letter-spacing:-0.057px">A.11.1.4</span></div><div class="t" style="left:76px;top:845px;width:370px;height:16px"><span style="letter-spacing:0.003px">Protecting against external and environmental threats</span></div><div class="t" style="left:449px;top:845px;width:258px;height:16px"><span style="letter-spacing:-0.009px">PHY-010, PHY-020, PHY-040, PHY-050,</span></div><div class="t" style="left:710px;top:845px;width:133px;height:16px"><span style="letter-spacing:-0.026px">9.4</span></div><div style="left:708px;top:845px;width:0;height:0;border-top:6px solid #008000;border-right:6px solid transparent"></div><div class="t" style="left:846px;top:845px;width:403px;height:16px"><span style="letter-spacing:0.180px">Physical Security – Physical Security for Systems – Facilities and</span></div><div class="t" style="left:1252px;top:845px;width:184px;height:16px"><span style="letter-spacing:-0.026px">31, 32</span></div><div class="t" style="left:1439px;top:845px;width:436px;height:16px"><span style="letter-spacing:-0.009px">ID.BE-5, PR.AC-2, PR.DS-5, PR.IP-5</span></div><div class="t" style="left:5px;top:862px;width:68px;height:16px"><span style="letter-spacing:-0.057px">A.11.1.5</span></div><div class="t" style="left:76px;top:862px;width:370px;height:16px"><span style="letter-spacing:-0.008px">Working in secure areas</span></div><div class="t" style="left:449px;top:862px;width:258px;height:16px"><span style="letter-spacing:-0.009px">PHY-010, PHY-020, PHY-040, PHY-050,</span></div><div class="t" style="left:710px;top:862px;width:133px;height:16px"><span style="letter-spacing:-0.026px">9.4</span></div><div style="left:708px;top:862px;width:0;height:0;border-top:6px solid #008000;border-right:6px solid transparent"></div><div class="t" style="left:846px;top:862px;width:403px;height:16px"><span style="letter-spacing:0.180px">Physical Security – Physical Security for Systems – Facilities and</span></div><div class="t" style="left:1439px;top:862px;width:436px;height:16px"><span style="letter-spacing:-0.054px">PR.AC-2, PR.DS-5</span></div><div class="t" style="left:5px;top:879px;width:68px;height:16px"><span style="letter-spacing:-0.057px">A.11.1.6</span></div><div class="t" style="left:76px;top:879px;width:370px;height:16px"><span style="letter-spacing:-0.080px">Delivery and loading areas</span></div><div class="t" style="left:449px;top:879px;width:258px;height:16px"><span style="letter-spacing:-0.009px">PHY-010, PHY-020, PHY-040, PHY-050,</span></div><div class="t" style="left:846px;top:879px;width:403px;height:16px"><span style="letter-spacing:0.180px">Physical Security – Physical Security for Systems – Facilities and</span></div><div class="t" style="left:1252px;top:879px;width:184px;height:16px"><span style="letter-spacing:-0.248px">35</span></div><div class="t" style="left:1439px;top:879px;width:436px;height:16px"><span style="letter-spacing:-0.198px">PR.AC-2</span></div><div class="t" style="left:5px;top:896px;width:68px;height:16px"><span style="letter-spacing:-0.057px">A.11.2.1</span></div><div class="t" style="left:76px;top:896px;width:370px;height:16px"><span style="letter-spacing:0.043px">Equipment sitting and protection</span></div><div class="t" style="left:449px;top:896px;width:258px;height:16px"><span style="letter-spacing:-0.009px">PHY-010, PHY-020, PHY-040, PHY-050,</span></div><div class="t" style="left:846px;top:896px;width:403px;height:16px"><span style="letter-spacing:0.151px">Physical Security – Physical Security for Systems – Servers and</span></div><div class="t" style="left:1439px;top:896px;width:436px;height:16px"><span style="letter-spacing:-0.023px">PR.AC-2, PR.DS-5, PR.IP-5</span></div><div class="t" style="left:5px;top:913px;width:68px;height:16px"><span style="letter-spacing:-0.057px">A.11.2.2</span></div><div class="t" style="left:76px;top:913px;width:370px;height:16px"><span style="letter-spacing:0.071px">Support utilities</span></div><div class="t" style="left:846px;top:913px;width:403px;height:16px"><span style="letter-spacing:0.151px">Physical Security – Physical Security for Systems – Servers and</span></div><div class="t" style="left:1439px;top:913px;width:436px;height:16px"><span style="letter-spacing:-0.017px">ID.BE-4, PR.IP-5</span></div><div class="t" style="left:5px;top:930px;width:68px;height:16px"><span style="letter-spacing:-0.057px">A.11.2.3</span></div><div class="t" style="left:76px;top:930px;width:370px;height:16px"><span style="letter-spacing:0.035px">Cabling security</span></div><div class="t" style="left:449px;top:930px;width:258px;height:16px"><span style="letter-spacing:-0.009px">PHY-010, PHY-020, PHY-040, PHY-050,</span></div><div class="t" style="left:846px;top:930px;width:403px;height:16px"><span style="letter-spacing:0.151px">Physical Security – Physical Security for Systems – Servers and</span></div><div class="t" style="left:1439px;top:930px;width:436px;height:16px"><span style="letter-spacing:-0.033px">ID.BE-4, PR.AC-2, PR.IP-5</span></div><div class="t" style="left:5px;top:947px;width:68px;height:16px"><span style="letter-spacing:-0.057px">A.11.2.4</span></div><div class="t" style="left:76px;top:947px;width:370px;height:16px"><span style="letter-spacing:-0.010px">Equipment maintenance</span></div><div class="t" style="left:449px;top:947px;width:258px;height:16px"><span style="letter-spacing:-0.009px">PHY-010, PHY-020, PHY-040, PHY-050,</span></div><div class="t" style="left:846px;top:947px;width:403px;height:16px"><span style="letter-spacing:0.151px">Physical Security – Physical Security for Systems – Servers and</span></div><div class="t" style="left:1439px;top:947px;width:436px;height:16px"><span style="letter-spacing:-0.005px">PR.DS-8, PR.IP-12, PR.MA-1, PR.MA-2</span></div><div class="sep" style="left:77px"></div><div class="sep" style="left:166px"></div><div class="sep" style="left:500px"></div><div class="sep" style="left:572px"></div><div class="sep" style="left:644px"></div><div class="sep" style="left:753px"></div><div class="sep" style="left:863px"></div><div class="sep" style="left:917px"></div><div class="sep" style="left:970px"></div><div class="sep" style="left:1043px"></div><div class="sep" style="left:1159px"></div><div class="sep" style="left:1276px"></div><div class="sep" style="left:1346px"></div><div class="sep" style="left:1401px"></div><div class="sep" style="left:1531px"></div><div class="sep" style="left:1644px"></div><div class="sep" style="left:1733px"></div><div style="left:80px;top:969px;width:84px;height:22px;background:#808080;"></div><div class="tt" style="left:90.00px;width:61.3px;color:#ffffff"><span style="transform:scaleX(1.0400)">SUMMARY</span></div><div style="left:169px;top:969px;width:79px;height:22px;background:#ff0000;"></div><div class="tt" style="left:177.90px;width:57.4px;color:#ffffff"><span style="transform:scaleX(1.0179)">ISO 27001</span></div><div style="left:393px;top:969px;width:106px;height:22px;background:#d6dce4;"></div><div class="tt" style="left:403.80px;width:84.0px;color:#000000"><span style="transform:scaleX(0.9804)">APRA CPS 234</span></div><div style="left:503px;top:969px;width:68px;height:22px;background:#fff2cc;"></div><div class="tt" style="left:512.60px;width:47.4px;color:#000000"><span style="transform:scaleX(0.9460)">VPDSS1</span></div><div style="left:575px;top:969px;width:68px;height:22px;background:#fff2cc;"></div><div class="tt" style="left:584.60px;width:47.4px;color:#000000"><span style="transform:scaleX(0.9607)">VPDSS2</span></div><div style="left:647px;top:969px;width:104px;height:22px;background:#4472c4;"></div><div class="tt" style="left:656.60px;width:76.7px;color:#ffffff"><span style="transform:scaleX(1.0823)">ISM(2019Mar)</span></div><div style="left:756px;top:969px;width:106px;height:22px;background:#4472c4;"></div><div class="tt" style="left:766.20px;width:77.4px;color:#ffffff"><span style="transform:scaleX(1.0779)">ISM(2019Nov)</span></div><div style="left:866px;top:969px;width:50px;height:22px;background:#ed7d31;"></div><div class="tt" style="left:875.70px;width:31.3px;color:#000000"><span style="transform:scaleX(0.8901)">PSPF</span></div><div style="left:920px;top:969px;width:49px;height:22px;background:#7030a0;"></div><div class="tt" style="left:930.00px;width:27.3px;color:#ffffff"><span style="transform:scaleX(1.0094)">NIST</span></div><div style="left:973px;top:969px;width:69px;height:22px;background:#70ad47;"></div><div class="tt" style="left:982.70px;width:48.7px;color:#000000"><span style="transform:scaleX(0.9612)">PCI-DSS</span></div><div style="left:1046px;top:969px;width:111px;height:22px;background:#000000;"></div><div class="tt" style="left:1057.80px;width:76.0px;color:#ffffff"><span style="transform:scaleX(1.1456)">Control Import</span></div><div class="tt" style="left:1174.20px;width:78.7px;color:#ffffff"><span style="transform:scaleX(1.1054)">Control Library</span></div><div class="tt" style="left:1288.40px;width:40.7px;color:#ffffff"><span style="transform:scaleX(1.0863)">Threats</span></div><div style="left:1349px;top:969px;width:50px;height:22px;background:#ffd7d7;"></div><div class="tt" style="left:1358.40px;width:29.3px;color:#000000"><span style="transform:scaleX(1.0224)">Risks</span></div><div style="left:1404px;top:969px;width:125px;height:22px;background:#7030a0;"></div><div class="tt" style="left:1415.80px;width:92.7px;color:#ffffff"><span style="transform:scaleX(1.0742)">CompletePolicies</span></div><div style="left:1534px;top:969px;width:109px;height:22px;background:#7030a0;"></div><div class="tt" style="left:1545.90px;width:78.0px;color:#ffffff"><span style="transform:scaleX(1.0534)">SimplePolicies</span></div><div style="left:1647px;top:969px;width:85px;height:22px;background:#fff2cc;"></div><div class="tt" style="left:1656.60px;width:59.4px;color:#000000"><span style="transform:scaleX(1.0577)">Awareness</span></div><div style="left:250px;top:966px;width:141px;height:23px;background:#ffffff;"></div><div style="left:253px;top:970px;width:136px;height:18px;background:linear-gradient(#ffffff 10%,#ff9a9a)"></div><div style="left:250px;top:989px;width:141px;height:2px;background:#1e7145;"></div><div class="tt" style="left:262.00px;top:968px;font-size:13px;font-weight:bold;color:#1e7145"><span style="transform:scaleX(0.9814)">ISO 27001 Annex A</span></div><div class="tt" style="left:1746.5px;width:44.5px;overflow:hidden;color:#fff"><span style="transform:scaleX(0.96)">Compliance</span></div><div style="left:1799px;top:983px;width:2.2px;height:2.2px;background:#fff;"></div><div style="left:1803.5px;top:983px;width:2.2px;height:2.2px;background:#fff;"></div><div style="left:1808px;top:983px;width:2.2px;height:2.2px;background:#fff;"></div><div style="left:1824px;top:972px;width:16px;height:16px;border:1.4px solid #fff;border-radius:50%"></div><div style="left:1828px;top:979px;width:8px;height:2px;background:#fff;"></div><div style="left:1831px;top:976px;width:2px;height:8px;background:#fff;"></div><div style="left:1857px;top:975px;width:2.5px;height:2.5px;background:#fff;"></div><div style="left:1857px;top:979px;width:2.5px;height:2.5px;background:#fff;"></div><div style="left:1857px;top:983px;width:2.5px;height:2.5px;background:#fff;"></div><div style="left:5px;top:976px;width:0;height:0;border-top:4px solid transparent;border-bottom:4px solid transparent;border-right:4.5px solid #a0a0a0"></div><div style="left:33px;top:976px;width:0;height:0;border-top:4px solid transparent;border-bottom:4px solid transparent;border-left:4.5px solid #fff"></div>
</body></html>
